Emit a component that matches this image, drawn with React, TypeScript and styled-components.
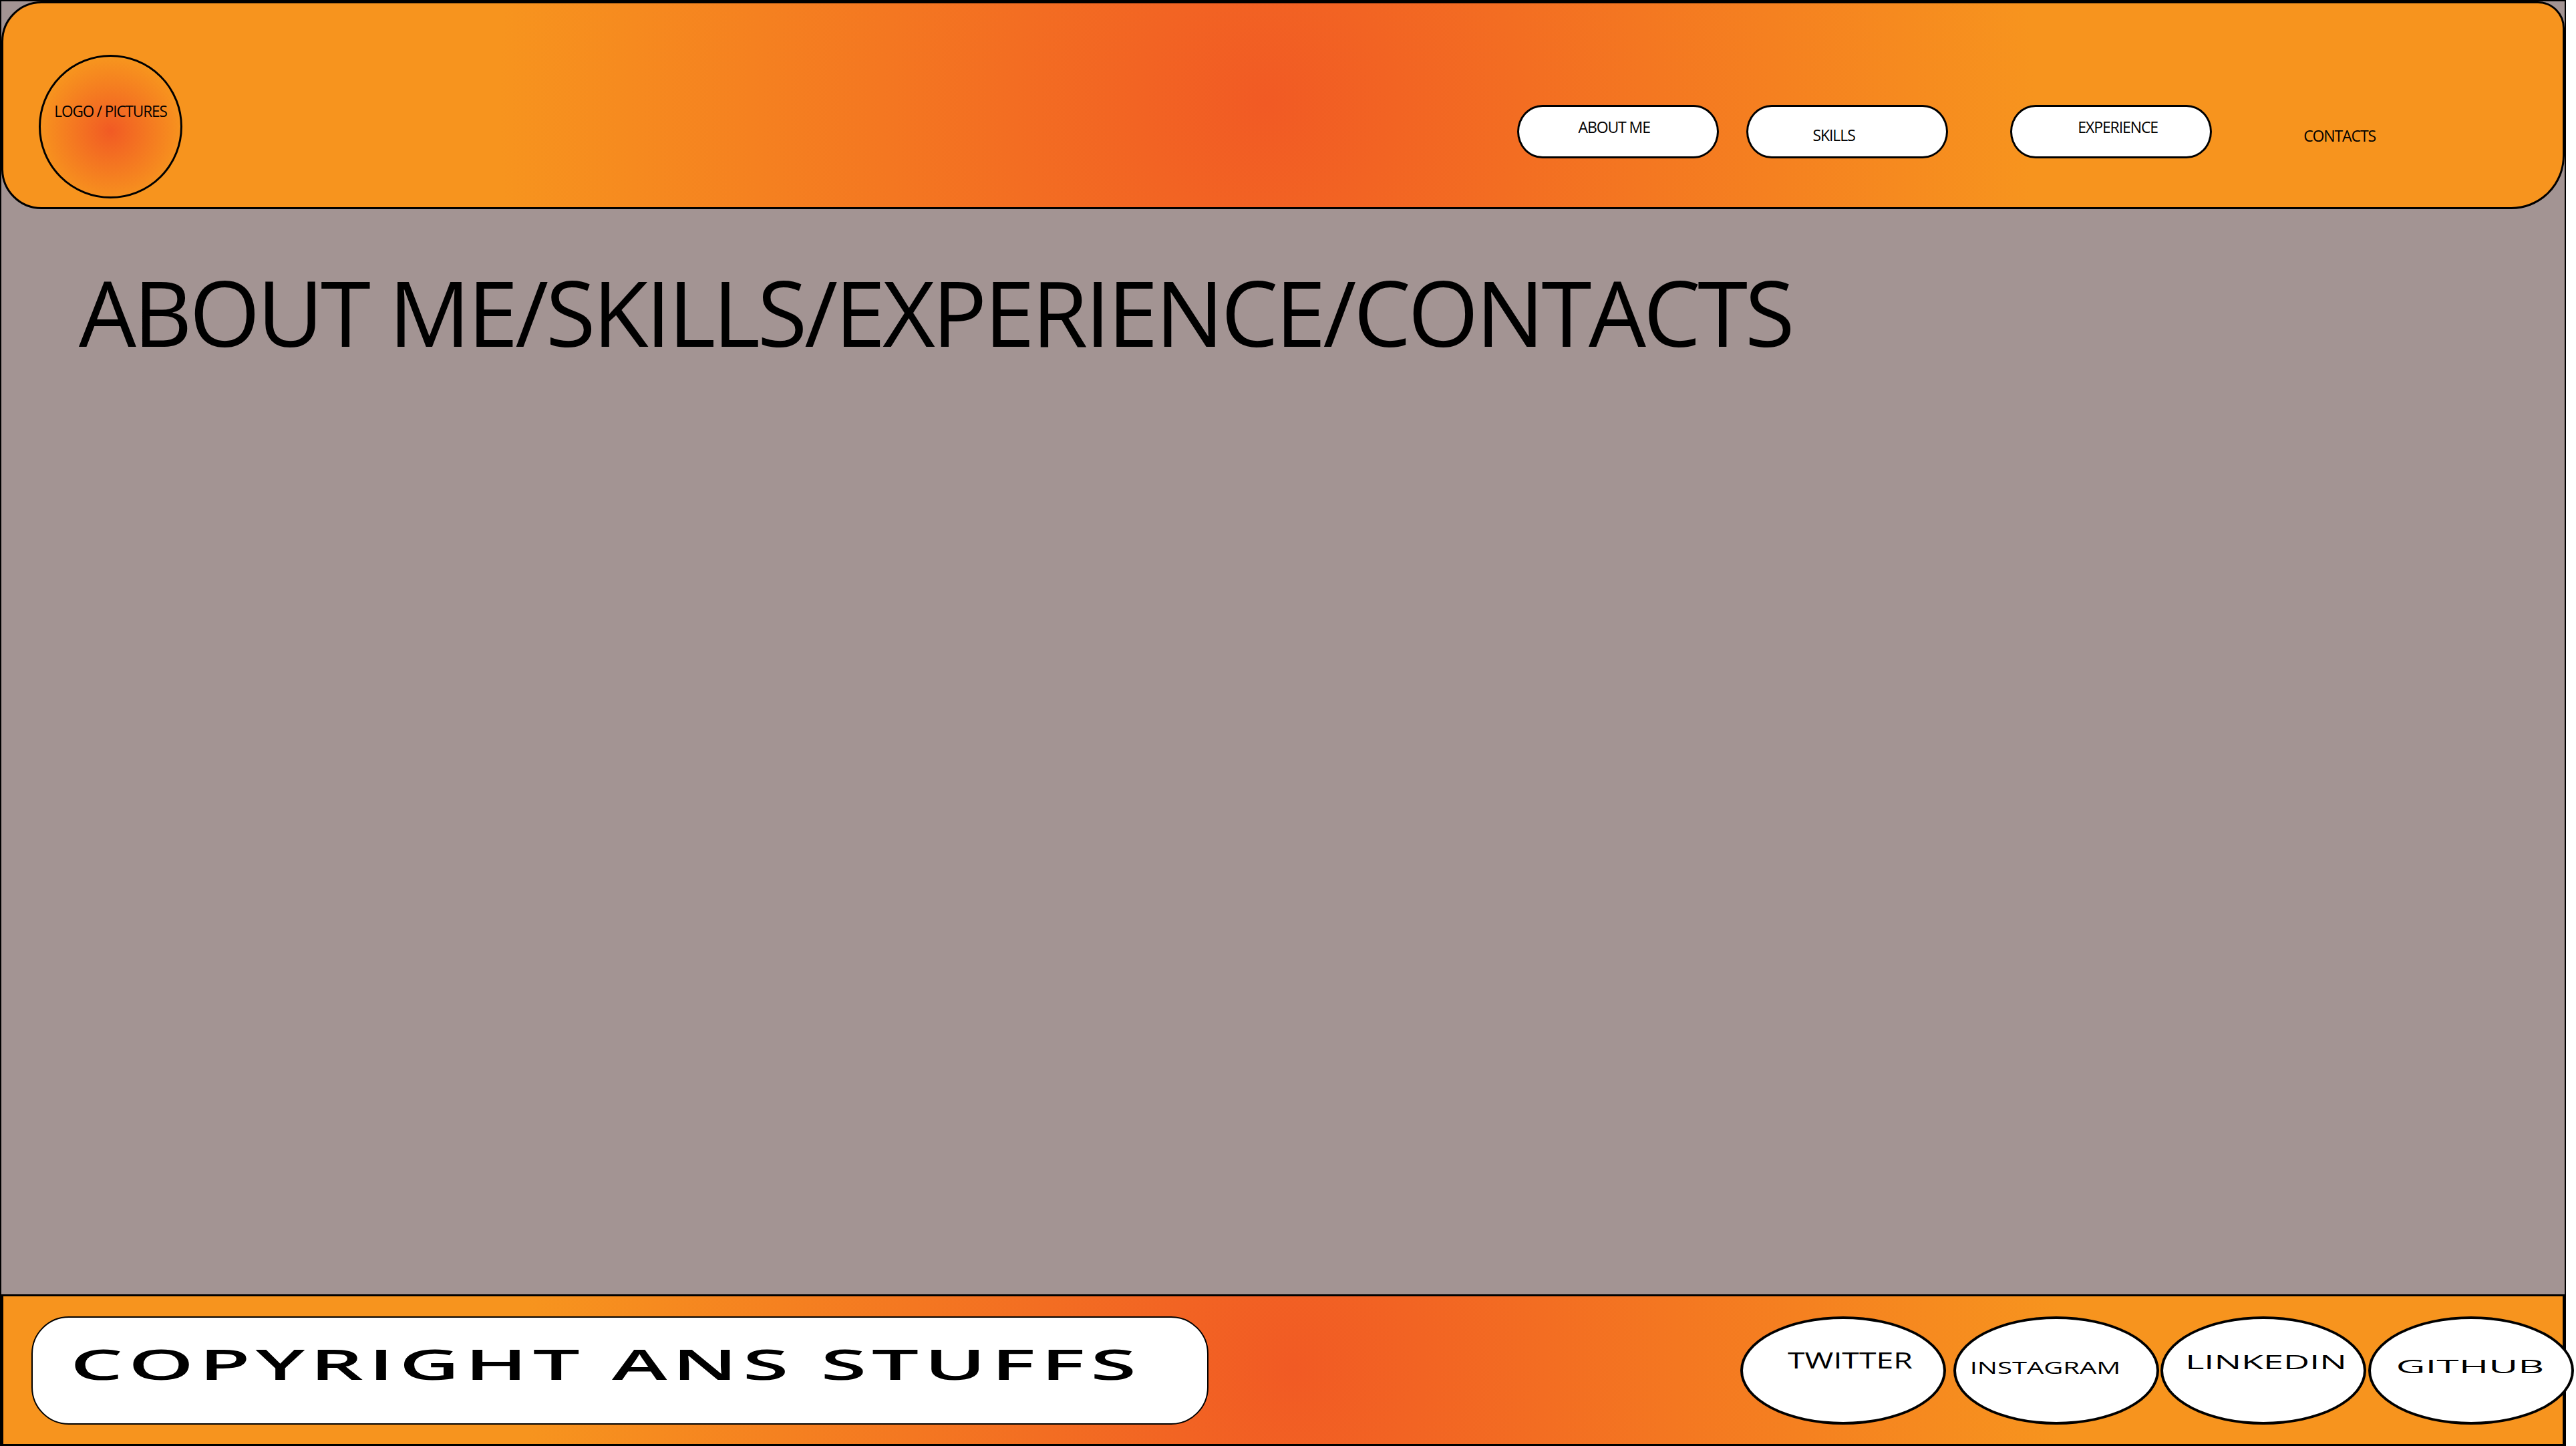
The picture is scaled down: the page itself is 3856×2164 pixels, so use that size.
import React from "react";
import styled, { createGlobalStyle, css } from "styled-components";

const ORANGE = "#F7941E";
const DEEP = "#F15A24";
const GRAY = "#A39493";

const GlobalStyle = createGlobalStyle`
  html, body { margin: 0; padding: 0; background: #ffffff; }
  body { font-family: "Open Sans", "Liberation Sans", sans-serif; color: #000; }
  * { box-sizing: border-box; }
`;

const shift = (dx: number, dy: number) => css`
  padding-left: ${Math.max(0, 2 * dx)}px;
  padding-right: ${Math.max(0, -2 * dx)}px;
  padding-top: ${Math.max(0, 2 * dy)}px;
  padding-bottom: ${Math.max(0, -2 * dy)}px;
`;

const Page = styled.div`
  width: 3841px;
  height: 2164px;
  display: flex;
  flex-direction: column;
  background: ${GRAY};
  border: 2px solid #000;
  border-bottom: none;
`;

const Header = styled.header`
  flex: none;
  height: 311px;
  display: flex;
  align-items: flex-start;
  padding-left: 53px;
  padding-right: 280px;
  border: 3px solid #000;
  border-radius: 60px 40px 80px 60px;
  background: radial-gradient(circle 1150px at 1890px 150px, ${DEEP} 0%, ${ORANGE} 100%);
`;

const Logo = styled.div`
  width: 215px;
  height: 215px;
  margin-top: 77px;
  border: 3px solid #000;
  border-radius: 50%;
  background: radial-gradient(circle 108px at 50% 53%, ${DEEP} 0%, ${ORANGE} 100%);
  display: flex;
  flex-direction: column;
  align-items: center;
  padding-top: 69px;
`;

const LogoText = styled.span`
  font-size: 24.5px;
  line-height: 1;
  letter-spacing: -1.2px;
  white-space: nowrap;
  transform: scaleX(0.92);
`;

const Nav = styled.nav`
  margin-left: auto;
  margin-top: 152px;
  display: flex;
  align-items: center;
`;

const NavButton = styled.a<{ $ml: number; $dx: number; $dy: number; $plain?: boolean }>`
  height: 80px;
  width: ${(p) => (p.$plain ? "auto" : "302px")};
  margin-left: ${(p) => p.$ml}px;
  display: flex;
  align-items: center;
  justify-content: center;
  font-size: 23px;
  line-height: 1;
  letter-spacing: -1.1px;
  white-space: nowrap;
  color: #000;
  text-decoration: none;
  ${(p) =>
    p.$plain
      ? css`
          background: transparent;
          border: none;
        `
      : css`
          background: #fff;
          border: 3px solid #000;
          border-radius: 38px / 40px;
        `}
  ${(p) => shift(p.$dx, p.$dy)}
`;

const Main = styled.main`
  flex: 1;
  padding-left: 116px;
  padding-top: 86px;
`;

const Title = styled.h1`
  margin: 0;
  font-size: 136px;
  font-weight: 400;
  line-height: 1;
  letter-spacing: -4.2px;
  white-space: nowrap;
`;

const Footer = styled.footer`
  flex: none;
  height: 227px;
  display: flex;
  align-items: center;
  padding-left: 42px;
  border: 3px solid #000;
  background: radial-gradient(circle 1150px at 1930px 110px, ${DEEP} 0%, ${ORANGE} 100%);
`;

const Copyright = styled.div`
  width: 1762px;
  height: 162px;
  border: 2px solid #000;
  border-radius: 56px;
  background: #fff;
  display: flex;
  align-items: center;
  padding-left: 56px;
  padding-bottom: 20px;
`;

const CopyText = styled.span`
  display: inline-block;
  font-size: 64px;
  font-weight: 600;
  line-height: 1;
  letter-spacing: 4px;
  white-space: nowrap;
  transform: scaleX(1.95);
  transform-origin: left center;
`;

const Socials = styled.div`
  margin-left: auto;
  margin-right: -17px;
  display: flex;
  align-items: center;
`;

const Bubble = styled.a<{ $ml: number; $dx: number; $dy: number }>`
  width: 308px;
  height: 162px;
  margin-left: ${(p) => p.$ml}px;
  border: 4px solid #000;
  border-radius: 50%;
  background: #fff;
  display: flex;
  align-items: center;
  justify-content: center;
  color: #000;
  text-decoration: none;
  ${(p) => shift(p.$dx, p.$dy)}
`;

const BubbleText = styled.span<{ $size: number; $sx: number }>`
  display: inline-block;
  font-size: ${(p) => p.$size}px;
  line-height: 1;
  white-space: nowrap;
  transform: scaleX(${(p) => p.$sx});
`;

const navItems = [
  { label: "ABOUT ME", ml: 0, dx: -6, dy: -7 },
  { label: "SKILLS", ml: 41, dx: -20, dy: 5 },
  { label: "EXPERIENCE", ml: 93, dx: 10, dy: -7 },
  { label: "CONTACTS", ml: 137, dx: 0, dy: 6, plain: true },
];

const socials = [
  { label: "TWITTER", ml: 0, size: 32, sx: 1.45, dx: 10, dy: -15 },
  { label: "INSTAGRAM", ml: 11, size: 25, sx: 1.6, dx: -17, dy: -4 },
  { label: "LINKEDIN", ml: 2, size: 29.5, sx: 1.83, dx: 4, dy: -13 },
  { label: "GITHUB", ml: 3, size: 27.5, sx: 2.2, dx: -2, dy: -6 },
];

export default function App() {
  return (
    <>
      <GlobalStyle />
      <Page>
        <Header>
          <Logo>
            <LogoText>LOGO / PICTURES</LogoText>
          </Logo>
          <Nav>
            {navItems.map((n) => (
              <NavButton key={n.label} $ml={n.ml} $dx={n.dx} $dy={n.dy} $plain={n.plain}>
                {n.label}
              </NavButton>
            ))}
          </Nav>
        </Header>
        <Main>
          <Title>ABOUT ME/SKILLS/EXPERIENCE/CONTACTS</Title>
        </Main>
        <Footer>
          <Copyright>
            <CopyText>COPYRIGHT ANS STUFFS</CopyText>
          </Copyright>
          <Socials>
            {socials.map((s) => (
              <Bubble key={s.label} $ml={s.ml} $dx={s.dx} $dy={s.dy}>
                <BubbleText $size={s.size} $sx={s.sx}>
                  {s.label}
                </BubbleText>
              </Bubble>
            ))}
          </Socials>
        </Footer>
      </Page>
    </>
  );
}
